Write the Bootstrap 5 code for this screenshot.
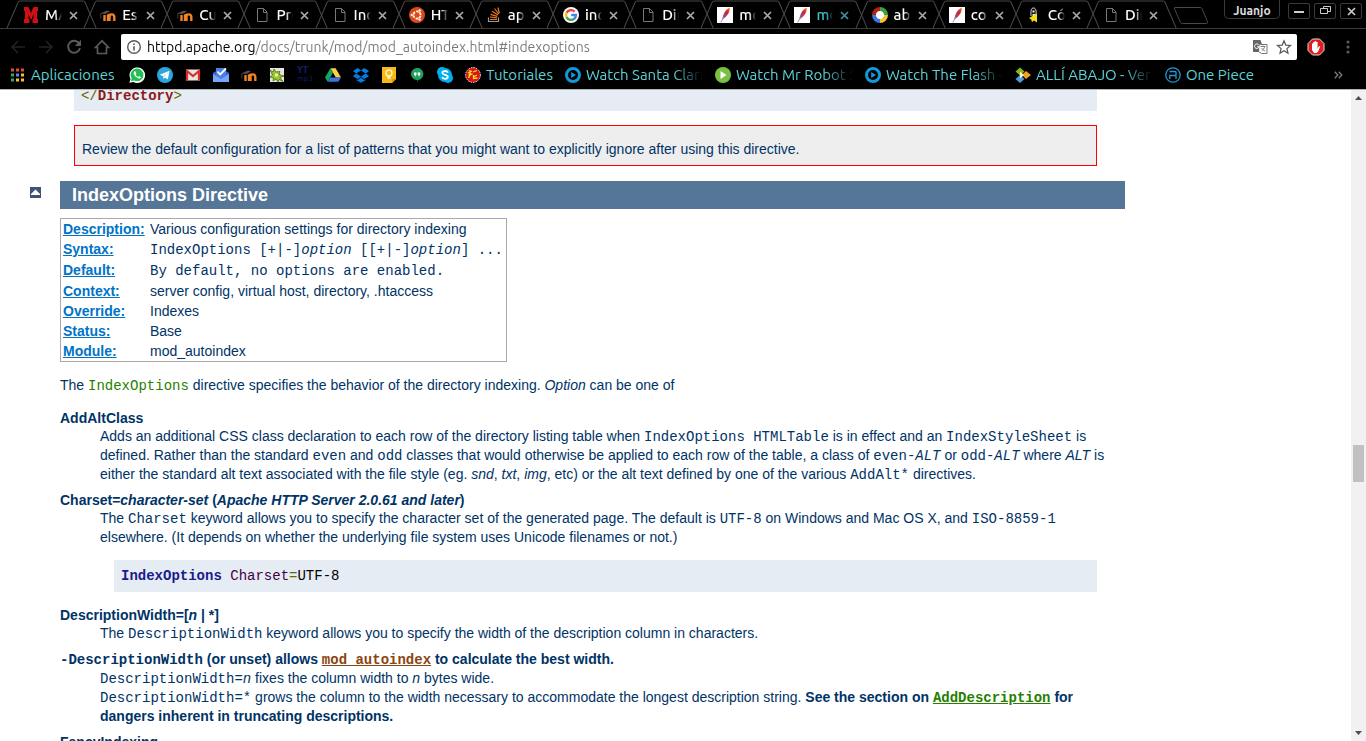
<!DOCTYPE html>
<html lang="es">
<head>
<meta charset="utf-8">
<meta name="viewport" content="width=device-width, initial-scale=1">
<title>mod_autoindex - Apache HTTP Server</title>
<link rel="stylesheet" href="https://cdn.jsdelivr.net/npm/bootstrap@5.3.0/dist/css/bootstrap.min.css">
<style>
  body { font-family: "Liberation Sans", Arial, sans-serif; font-size: 14px; line-height: 19px; color: #036; background: #fff; }
  button { background: none; border: 0; padding: 0; }
  svg { display: block; flex: none; }

  /* Browser frame */
  .browser { background: #000; font-family: Ubuntu, "Noto Sans", sans-serif; border-bottom: 1px solid #b4b4b4; }
  .tabstrip { height: 29px; border-bottom: 1px solid #3c3c3c; }
  .tabset { padding-left: 13px; }
  .tab { flex: 1 1 0; min-width: 0; height: 28px; padding: 2px 0 0 10px; font-size: 15px; }
  .tab > a { color: #fff; text-decoration: none; gap: 6px; }
  .tab .edge { position: absolute; left: -7px; top: 0; width: calc(100% + 14px); height: 28px; pointer-events: none; stroke: #484848; }
  .newtab { margin-top: 7px; }
  .newtab path { fill: none; stroke: #484848; }
  .tab .title { width: 17px; line-height: 20px; font-weight: 500; }
  .fade-end { overflow: hidden; white-space: nowrap; -webkit-mask-image: linear-gradient(90deg, #000 60%, transparent); mask-image: linear-gradient(90deg, #000 60%, transparent); }
  .tab.current > a { color: #3fc3cb; }
  .tab .x { margin-left: 7px; color: #aaa; }
  .tab.current .x { color: #3a9299; }
  .frame-tools { width: 196px; padding: 0 4px 0 3px; }
  .user { width: 56px; height: 19px; border: 1px solid #3a3a3a; border-top: 0; border-radius: 0 0 5px 5px; padding-top: 3px; color: #ddd; font-size: 12px; line-height: 15px; font-weight: 600; }
  .winbtn { width: 22px; height: 16px; margin-top: 3px; border: 1px solid #3a3a3a; border-radius: 2px; color: #ccc; }
  .toolbar { padding: 5px 9px 0 10px; height: 31px; }
  .toolbar .nav-icons { width: 111px; gap: 12px; }
  .omnibox { height: 26px; background: #fff; border-radius: 2px; padding: 0 5px; }
  .omnibox .info { margin-right: 5px; }
  .omnibox input { border: 0; outline: 0; font-size: 14px; height: 26px; padding: 0; min-width: 0; color: #777;
    background: linear-gradient(90deg, #000 108px, #777 108px); -webkit-background-clip: text; background-clip: text; -webkit-text-fill-color: transparent; }
  .toolbar .ext { width: 60px; padding-left: 10px; }
  .bookmarks { height: 29px; padding: 0 23px 0 9px; gap: 12px; font-size: 15px; line-height: 20px; }
  .bookmarks a { color: #5ed3d8; text-decoration: none; gap: 5px; white-space: nowrap; }
  .bookmarks .apps { width: 108px; padding-left: 2px; gap: 7px; }
  .bookmarks .long { width: 138px; }
  .bookmarks .fade-end { -webkit-mask-image: linear-gradient(90deg, #000 75%, transparent); mask-image: linear-gradient(90deg, #000 75%, transparent); }
  .bookmarks .ytmark { font: bold 8px/8px "DejaVu Sans", sans-serif; color: #121a66; width: 16px; }
  .ytmark span { font-size: 7px; display: block; line-height: 8px; font-weight: normal; }

  /* Document */
  .viewport { min-height: 0; }
  .doc { padding: 0 226px 0 60px; overflow: hidden; }
  .doc code, .doc pre { font-family: "Liberation Mono", "Courier New", monospace; font-size: 14px; color: inherit; }
  .doc code { line-height: 14px; }
  .doc pre.sample { background: #e5ecf3; padding: 7px; line-height: 18px; margin: 0 14px; color: #000; overflow: hidden; }
  .doc pre.sample.first { margin: -10px 28px 14px 14px; padding-bottom: 6px; }
  .warning { background: #eee; border: 1px solid #f00; padding: 14px 7px 6px; margin: 0 28px 15px 14px; }
  .doc h2 { background: #557697; color: #fff; font-size: 18px; line-height: 28px; font-weight: bold; padding-left: 12px; margin: 0 0 9px; }
  .totop { position: absolute; left: -30px; top: 6px; }
  .directive { border: 1px solid #aaa; border-collapse: separate; border-spacing: 0; width: 447px; margin-bottom: 14px; line-height: 18px; }
  .directive th, .directive td { padding: 1px 2px; height: 20px; }
  .directive .mono th, .directive .mono td { padding-bottom: 2px; height: 21px; vertical-align: top; }
  .directive .mono + .mono th, .directive .mono + .mono td { vertical-align: top; }
  .directive th { width: 87px; }
  .directive td { white-space: nowrap; }
  .doc a { color: #0073c7; }
  .doc a.module { color: #8b4513; }
  .doc a.name { color: #287f00; }
  .prose { padding-right: 14px; }
  .prose p { margin-bottom: 14px; }
  .prose dt { line-height: 18px; font-weight: bold; margin-top: 7px; }
  .prose dt.coded { line-height: 19px; }
  .prose dt:first-child { margin-top: 0; }
  .prose dd { margin: 0 0 0 40px; }
  .prose dd pre.sample { margin: 13px 14px 14px; }
  .green { color: #287f00 !important; }
  .punct { color: #660; } .tagname { color: #8b1a1a; } .kw { color: #1a1a8c; } .type { color: #404; }
  .rail { width: 15px; background: #f1f1f1; padding: 6px 0; }
  .rail .thumb { position: absolute; left: 2px; right: 2px; background: #c1c1c1; }
</style>
</head>
<body class="vh-100 d-flex flex-column overflow-hidden">

<svg width="0" height="0" class="position-absolute" aria-hidden="true">
  <defs>
    <linearGradient id="feather" x1="1" y1="0" x2="0" y2="1"><stop offset="0" stop-color="#f69923"/><stop offset=".35" stop-color="#d22128"/><stop offset=".75" stop-color="#97478e"/><stop offset="1" stop-color="#6d6e71"/></linearGradient>
    <symbol id="i-page" viewBox="0 0 16 16"><path d="M3.500 1.500h6l3.500 3.500v9.500h-9.500zM9.500 1.500v4h3.500" fill="none" stroke="#777"/></symbol>
    <symbol id="i-moodle" viewBox="0 0 16 16"><path d="M4.500 14V8M8 14V8.500q2-1.500 2.800 0M9.500 14V9.800a2.100 2.100 0 0 1 4.800 0V14" fill="none" stroke="#f08228" stroke-width="2.400"/><path d="M0 6.500 7 3.500l3 .8-4.500 2.700z" fill="#55504c"/><path d="M.8 6.500v5" stroke="#55504c" stroke-width=".8"/></symbol>
    <symbol id="i-apache" viewBox="0 0 16 16"><path d="M0 0h16v16H0z" fill="#fff"/><path d="M12.500.800c1.300 2.500-1.500 8-7 11.700C5.500 8 8.500 2.500 12.500.800z" fill="url(#feather)"/><path d="M6.500 10 3.800 15.500" stroke="#a98bb5" stroke-width="1"/></symbol>
    <symbol id="i-close" viewBox="0 0 9 9"><path d="m1 1 7 7M8 1 1 8" stroke="currentColor" stroke-width="1.700"/></symbol>
    <symbol id="i-watch" viewBox="0 0 16 16"><circle cx="8" cy="8" r="6.500" fill="#000" stroke="#1297d8" stroke-width="3"/><path d="m6.200 5 4.800 3-4.800 3z" fill="#1297d8"/></symbol>
    <symbol id="i-edge" viewBox="0 0 91 28" preserveAspectRatio="none"><path d="M1 28 12 2.500q.6-1.500 2-1.500h63q1.400 0 2 1.500L90 28" fill="none"/></symbol>
  </defs>
</svg>

<header class="browser flex-shrink-0">
  <div class="tabstrip d-flex">
    <nav class="tabset d-flex flex-grow-1" aria-label="Pestañas">
      <div class="tab d-flex align-items-center position-relative"><svg class="edge"><use href="#i-edge"/></svg><a href="#" class="d-flex align-items-center"><svg width="16" height="16" viewBox="0 0 16 16"><path d="M1 0h4.500L8 6l2.500-6H15v4h-1v8h1v4H9.500v-4h1V7L8.700 12H7.300L5.500 7v5h1v4H1v-4h1V4H1z" fill="#d00f14"/></svg><span class="title fade-end">MA</span></a><button class="x" aria-label="Cerrar"><svg width="9" height="9"><use href="#i-close"/></svg></button></div>
      <div class="tab d-flex align-items-center position-relative"><svg class="edge"><use href="#i-edge"/></svg><a href="#" class="d-flex align-items-center"><svg width="16" height="16"><use href="#i-moodle"/></svg><span class="title fade-end">Est</span></a><button class="x" aria-label="Cerrar"><svg width="9" height="9"><use href="#i-close"/></svg></button></div>
      <div class="tab d-flex align-items-center position-relative"><svg class="edge"><use href="#i-edge"/></svg><a href="#" class="d-flex align-items-center"><svg width="16" height="16"><use href="#i-moodle"/></svg><span class="title fade-end">Cu</span></a><button class="x" aria-label="Cerrar"><svg width="9" height="9"><use href="#i-close"/></svg></button></div>
      <div class="tab d-flex align-items-center position-relative"><svg class="edge"><use href="#i-edge"/></svg><a href="#" class="d-flex align-items-center"><svg width="16" height="16"><use href="#i-page"/></svg><span class="title fade-end">Pro</span></a><button class="x" aria-label="Cerrar"><svg width="9" height="9"><use href="#i-close"/></svg></button></div>
      <div class="tab d-flex align-items-center position-relative"><svg class="edge"><use href="#i-edge"/></svg><a href="#" class="d-flex align-items-center"><svg width="16" height="16"><use href="#i-page"/></svg><span class="title fade-end">Ind</span></a><button class="x" aria-label="Cerrar"><svg width="9" height="9"><use href="#i-close"/></svg></button></div>
      <div class="tab d-flex align-items-center position-relative"><svg class="edge"><use href="#i-edge"/></svg><a href="#" class="d-flex align-items-center"><svg width="16" height="16" viewBox="0 0 16 16"><circle cx="8" cy="8" r="8" fill="#dd4814"/><circle cx="8" cy="8" r="3.600" fill="none" stroke="#fff" stroke-width="1.700" stroke-dasharray="6.300 1.240" stroke-dashoffset="-.6"/><g fill="#fff" stroke="#dd4814" stroke-width=".6"><circle cx="2.900" cy="8" r="1.500"/><circle cx="10.600" cy="3.500" r="1.500"/><circle cx="10.600" cy="12.500" r="1.500"/></g></svg><span class="title fade-end">HT</span></a><button class="x" aria-label="Cerrar"><svg width="9" height="9"><use href="#i-close"/></svg></button></div>
      <div class="tab d-flex align-items-center position-relative"><svg class="edge"><use href="#i-edge"/></svg><a href="#" class="d-flex align-items-center"><svg width="16" height="16" viewBox="0 0 16 16"><path d="M2.500 10.500v4h10v-4" fill="none" stroke="#999" stroke-width="1.200"/><path d="M4 12.500h7M4 10l7 .8M4.500 7.300l6.800 2M6 4.300l6 3.800M8.500 1.500l4.200 5.500M12 .5l1.300 6" stroke="#e87722" stroke-width="1.200"/></svg><span class="title fade-end">ap</span></a><button class="x" aria-label="Cerrar"><svg width="9" height="9"><use href="#i-close"/></svg></button></div>
      <div class="tab d-flex align-items-center position-relative"><svg class="edge"><use href="#i-edge"/></svg><a href="#" class="d-flex align-items-center"><svg width="16" height="16" viewBox="0 0 16 16"><circle cx="8" cy="8" r="8" fill="#fff"/><g fill="none" stroke-width="2.400"><path d="M11.600 4.600A5 5 0 0 0 3.600 5.800" stroke="#ea4335"/><path d="M3.600 5.700a5 5 0 0 0 0 4.700" stroke="#fbbc05"/><path d="M3.600 10.200a5 5 0 0 0 7.700 1.500" stroke="#34a853"/><path d="M11.200 11.800A4.800 4.800 0 0 0 12.900 8H8.200" stroke="#4285f4"/></g></svg><span class="title fade-end">ind</span></a><button class="x" aria-label="Cerrar"><svg width="9" height="9"><use href="#i-close"/></svg></button></div>
      <div class="tab d-flex align-items-center position-relative"><svg class="edge"><use href="#i-edge"/></svg><a href="#" class="d-flex align-items-center"><svg width="16" height="16"><use href="#i-page"/></svg><span class="title fade-end">Dir</span></a><button class="x" aria-label="Cerrar"><svg width="9" height="9"><use href="#i-close"/></svg></button></div>
      <div class="tab d-flex align-items-center position-relative"><svg class="edge"><use href="#i-edge"/></svg><a href="#" class="d-flex align-items-center"><svg width="16" height="16"><use href="#i-apache"/></svg><span class="title fade-end">mo</span></a><button class="x" aria-label="Cerrar"><svg width="9" height="9"><use href="#i-close"/></svg></button></div>
      <div class="tab current d-flex align-items-center position-relative"><svg class="edge"><use href="#i-edge"/></svg><a href="#" class="d-flex align-items-center" aria-current="page"><svg width="16" height="16"><use href="#i-apache"/></svg><span class="title fade-end">mo</span></a><button class="x" aria-label="Cerrar"><svg width="9" height="9"><use href="#i-close"/></svg></button></div>
      <div class="tab d-flex align-items-center position-relative"><svg class="edge"><use href="#i-edge"/></svg><a href="#" class="d-flex align-items-center"><svg width="16" height="16" viewBox="0 0 16 16"><circle cx="8" cy="8" r="4.500" fill="#fff"/><g fill="none" stroke-width="4"><path d="M2 8a6 6 0 0 1 6-6" stroke="#b5200f"/><path d="M8 2a6 6 0 0 1 6 6" stroke="#3aa33f"/><path d="M14 8a6 6 0 0 1-6 6" stroke="#f5c52c"/><path d="M8 14a6 6 0 0 1-6-6" stroke="#3a78e0"/></g></svg><span class="title fade-end">ab</span></a><button class="x" aria-label="Cerrar"><svg width="9" height="9"><use href="#i-close"/></svg></button></div>
      <div class="tab d-flex align-items-center position-relative"><svg class="edge"><use href="#i-edge"/></svg><a href="#" class="d-flex align-items-center"><svg width="16" height="16"><use href="#i-apache"/></svg><span class="title fade-end">co</span></a><button class="x" aria-label="Cerrar"><svg width="9" height="9"><use href="#i-close"/></svg></button></div>
      <div class="tab d-flex align-items-center position-relative"><svg class="edge"><use href="#i-edge"/></svg><a href="#" class="d-flex align-items-center"><svg width="16" height="16" viewBox="0 0 16 16"><path d="M5 9c-.3-5 0-8 2.500-8S10.500 4 10 9" fill="#111" stroke="#ddd"/><path d="M6.500 3.500h2v2h-2zM6.500 7h3v3h-3z" fill="#eee"/><path d="m3 11 8-4.500v9L8 13.500 6 15l-.8-2.500z" fill="#f3df13"/></svg><span class="title fade-end">Có</span></a><button class="x" aria-label="Cerrar"><svg width="9" height="9"><use href="#i-close"/></svg></button></div>
      <div class="tab d-flex align-items-center position-relative"><svg class="edge"><use href="#i-edge"/></svg><a href="#" class="d-flex align-items-center"><svg width="16" height="16"><use href="#i-page"/></svg><span class="title fade-end">Dir</span></a><button class="x" aria-label="Cerrar"><svg width="9" height="9"><use href="#i-close"/></svg></button></div>
    </nav>
    <div class="frame-tools d-flex align-items-start flex-shrink-0">
      <button class="newtab" aria-label="Nueva pestaña"><svg width="36" height="17" viewBox="0 0 36 17"><path d="M2 .5h25q1.500 0 2 1.200l5.500 13q.5 1.800-1 1.800h-24q-1.500 0-2-1.200L1.500 2Q.8.500 2 .500z"/></svg></button>
      <div class="d-flex align-items-start ms-auto gap-1">
        <button class="user me-1">Juanjo</button>
        <button class="winbtn d-flex align-items-center justify-content-center" aria-label="Minimizar"><svg width="10" height="10"><path d="M0 6h10" stroke="currentColor" stroke-width="2"/></svg></button>
        <button class="winbtn d-flex align-items-center justify-content-center" aria-label="Restaurar"><svg width="11" height="10"><path d="M3.500 2.500v-2h7v5h-3M.500 2.500h7v5h-7z" fill="none" stroke="currentColor"/></svg></button>
        <button class="winbtn d-flex align-items-center justify-content-center" aria-label="Cerrar ventana"><svg width="9" height="9"><use href="#i-close"/></svg></button>
      </div>
    </div>
  </div>

  <div class="toolbar d-flex">
    <div class="nav-icons d-flex align-items-center flex-shrink-0">
      <button aria-label="Atrás"><svg width="16" height="16" viewBox="0 0 16 16"><path d="M15 8H2.500M8 2 2 8l6 6" fill="none" stroke="#222" stroke-width="1.600"/></svg></button>
      <button aria-label="Adelante"><svg width="16" height="16" viewBox="0 0 16 16"><path d="M1 8h12.500M8 2l6 6-6 6" fill="none" stroke="#222" stroke-width="1.600"/></svg></button>
      <button aria-label="Recargar"><svg width="16" height="16" viewBox="0 0 16 16"><path d="M13.200 4.500A6 6 0 1 0 14 9" fill="none" stroke="#5a5a5a" stroke-width="1.900"/><path d="M15 .8V7H8.800z" fill="#5a5a5a"/></svg></button>
      <button aria-label="Inicio"><svg width="16" height="16" viewBox="0 0 16 16"><path d="M1.500 8.500 8 1.800l6.500 6.700h-2v6h-9v-6z" fill="none" stroke="#5a5a5a" stroke-width="1.700"/></svg></button>
    </div>
    <form class="omnibox d-flex align-items-center flex-grow-1" onsubmit="return false">
      <button type="button" class="info" aria-label="Información del sitio"><svg width="16" height="16" viewBox="0 0 16 16"><circle cx="8" cy="8" r="6.300" fill="none" stroke="#5a5a5a" stroke-width="1.400"/><path d="M8 7.200v4.300M8 4.500v1.600" stroke="#5a5a5a" stroke-width="1.600"/></svg></button>
      <input type="text" class="flex-grow-1" aria-label="Dirección" value="httpd.apache.org/docs/trunk/mod/mod_autoindex.html#indexoptions">
      <button type="button" class="me-2" aria-label="Traducir"><svg width="16" height="16" viewBox="0 0 16 16"><path d="M1 1h7.500l4 12H1z" fill="#666"/><path d="M7.500 5.500h7.500v9H9.500L7 13" fill="#fff" stroke="#777"/><path d="M6.700 5.800a2.300 2.300 0 1 0 .4 2H5" fill="none" stroke="#fff"/><path d="M8.500 7.500h5M11 6.500v1M12.700 7.500c-.3 2-2 3.500-3 4M9.700 9c.5 1.200 2 2.500 3.500 3" fill="none" stroke="#777" stroke-width=".9"/></svg></button>
      <button type="button" aria-label="Añadir a marcadores"><svg width="16" height="16" viewBox="0 0 16 16"><path d="m8 1.800 1.800 4.300 4.700.4-3.600 3.100 1.100 4.600L8 11.700l-4 2.500 1.100-4.600L1.500 6.500l4.700-.4z" fill="none" stroke="#555" stroke-width="1.200"/></svg></button>
    </form>
    <div class="ext d-flex align-items-center justify-content-between flex-shrink-0">
      <button aria-label="Bloqueador"><svg width="18" height="18" viewBox="0 0 18 18"><path d="M5.500 1h7L17 5.500v7L12.500 17h-7L1 12.500v-7z" fill="#e01c1c" stroke="#ddd"/><path d="M5 9V5.500h1.300V9V4h1.400v5V3h1.500v6V4h1.400v6.500l1.400-2.500 1.200.4-2 5.100-1.700 1.500H7L5 12z" fill="#fff"/></svg></button>
      <button aria-label="Menú"><svg width="16" height="16" viewBox="0 0 16 16" fill="#5a5a5a"><circle cx="7" cy="3" r="1.600"/><circle cx="7" cy="8" r="1.600"/><circle cx="7" cy="13" r="1.600"/></svg></button>
    </div>
  </div>

  <nav class="bookmarks d-flex align-items-center" aria-label="Marcadores">
    <a href="#" class="apps d-flex align-items-center"><svg width="13" height="14" viewBox="0 0 13 14"><path d="M0 .5h3v3H0zM5 .5h3v3H5zM10 .5h3v3h-3z" fill="#e8453c"/><path d="M0 5.500h3v3H0z" fill="#3aa757"/><path d="M5 5.500h3v3H5z" fill="#4688f1"/><path d="M10 5.500h3v3h-3zM5 10.500h3v3H5zM10 10.500h3v3h-3z" fill="#fabb2d"/><path d="M0 10.500h3v3H0z" fill="#3aa757"/></svg>Aplicaciones</a>
    <a href="#" aria-label="WhatsApp"><svg width="16" height="16" viewBox="0 0 16 16"><path d="M.3 15.700 1.500 12A7.800 7.800 0 1 1 4.500 15z" fill="#fff"/><path d="m1.800 14.200.9-2.800A6.400 6.400 0 1 1 5 13.500z" fill="#20c154"/><path d="M5.300 4.300c-1.600 1.800.2 4.300 1.800 5.700 1.700 1.400 4 2.200 5 .4l-1.900-1.300-1 .9c-1.200-.5-2-1.300-2.600-2.500l.7-.9-.8-2.200z" fill="#fff"/></svg></a>
    <a href="#" aria-label="Telegram"><svg width="16" height="16" viewBox="0 0 16 16"><circle cx="8" cy="8" r="8" fill="#2ca5e0"/><path d="m2.800 7.800 9.700-4-1.700 8.700-2.800-2-1.500 1.500-.5-2.800z" fill="#fff"/><path d="m6 9.200 5-4-3.800 4.700-.7 2z" fill="#b9dcef"/></svg></a>
    <a href="#" aria-label="Gmail"><svg width="16" height="16" viewBox="0 0 16 16"><path d="M1 2.500h14v11H1z" fill="#e8e6e3"/><path d="M2 13.500V4l6 5 6-5v9.500" fill="none" stroke="#d93025" stroke-width="2.200"/></svg></a>
    <a href="#" aria-label="Inbox"><svg width="16" height="16" viewBox="0 0 16 16"><path d="m0 6 8-5 8 5v9H0z" fill="#3367d6"/><path d="M3 1h10v8L8 12 3 9z" fill="#4a7fe8"/><path d="m4.500 4.500 2.700 3L13 1.500" fill="none" stroke="#fff" stroke-width="1.800"/><path d="m0 7 8 5 8-5v8H0z" fill="#78a7f8"/></svg></a>
    <a href="#" aria-label="Moodle"><svg width="16" height="16"><use href="#i-moodle"/></svg></a>
    <a href="#" aria-label="Engranaje"><svg width="16" height="16" viewBox="0 0 16 16"><path d="M1 1h14v14H1z" fill="#e4e6df"/><path d="m1 3 3 2 1-3 2 3 4-.5-1 3 5 1.500-4 1.500 3 4-4-2-1 2.500-2-3-3 2 .5-3L1 10l2.500-2z" fill="#9ac91c" stroke="#3d5b11" stroke-width=".7"/><circle cx="7.500" cy="8" r="1.700" fill="#e4e6df"/></svg></a>
    <a href="#" class="ytmark">YT<span>mp3</span></a>
    <a href="#" aria-label="Drive"><svg width="16" height="16" viewBox="0 0 16 16"><path d="M5.400 1.200h5.200L16 10.500h-5.200z" fill="#ffcf44"/><path d="M5.400 1.200 8 5.800 2.700 14.800 0 10.500z" fill="#11a861"/><path d="M5.300 10.500H16l-2.700 4.300H2.700z" fill="#3777e3"/></svg></a>
    <a href="#" aria-label="Dropbox"><svg width="16" height="16" viewBox="0 0 16 16" fill="#007ee5"><path d="M4.800 1 8 3.600 3.200 6.500 0 4zM11.200 1 8 3.600l4.800 2.900L16 4zM0 9.200l3.200-2.700L8 9.400 4.800 12zM16 9.200l-3.200-2.700L8 9.400l3.200 2.600zM3.500 12.300 4.800 13 8 10.500l3.200 2.500 1.300-.7v1L8 15.700l-4.500-2.400z"/></svg></a>
    <a href="#" aria-label="Keep"><svg width="16" height="16" viewBox="0 0 16 16"><path d="M1 0h14v12l-4 4H1z" fill="#f9b912"/><path d="M11 16v-4h4z" fill="#d69a0a"/><circle cx="8" cy="6" r="3" fill="none" stroke="#fff5d0" stroke-width="1.300"/><path d="M6.500 8.800h3v3h-3z" fill="#fff5d0"/></svg></a>
    <a href="#" aria-label="Hangouts"><svg width="16" height="16" viewBox="0 0 16 16"><path d="M8 1a6 6 0 0 1 .8 12L8 15.500V13A6 6 0 0 1 8 1z" fill="#1fa05f"/><path d="M5 5.500h2.500v2.300L6.500 9.300H5.600L6 8H5zM8.700 5.500h2.500v2.300l-1 1.500h-.9l.4-1.300h-1z" fill="#fff"/></svg></a>
    <a href="#" aria-label="Skype"><svg width="16" height="16" viewBox="0 0 16 16"><circle cx="5" cy="5" r="5" fill="#00aff0"/><circle cx="11" cy="11" r="5" fill="#00aff0"/><circle cx="8" cy="8" r="7" fill="#00aff0"/><path d="M10.800 5.800C10 3.300 5.200 3.500 5.400 6c.2 2.400 5.400 1.300 5.400 3.800S5.800 12.500 5.200 10" fill="none" stroke="#fff" stroke-width="1.800"/></svg></a>
    <a href="#" class="d-flex align-items-center"><svg width="16" height="16" viewBox="0 0 16 16"><circle cx="8" cy="8" r="7.400" fill="#d81515" stroke="#eee" stroke-dasharray="1.500 1"/><path d="M3 6l4-2M5 3v5L3.500 11M3.500 8l4-1M8 5l4-1.500M8.500 8v3.500l4-.5M8.500 10l3.500-2" fill="none" stroke="#ffdf1f" stroke-width="1.300"/></svg>Tutoriales</a>
    <a href="#" class="long d-flex align-items-center"><svg width="16" height="16"><use href="#i-watch"/></svg><span class="fade-end flex-grow-1">Watch Santa Clarita</span></a>
    <a href="#" class="long d-flex align-items-center"><svg width="16" height="16" viewBox="0 0 16 16"><circle cx="8" cy="8" r="8" fill="#79c143"/><path d="m5.500 4 6 4-6 4z" fill="#fff"/></svg><span class="fade-end flex-grow-1">Watch Mr Robot S</span></a>
    <a href="#" class="long d-flex align-items-center"><svg width="16" height="16"><use href="#i-watch"/></svg><span class="fade-end flex-grow-1">Watch The Flash -</span></a>
    <a href="#" class="long d-flex align-items-center"><svg width="16" height="16" viewBox="0 0 16 16"><path d="m5 .500 4.500 4-4.500 4-4.500-4z" fill="#86b817"/><path d="m11 4 5 4-5 4-4-4z" fill="#f4a21e"/><path d="m5 8 4.500 4L5 16 .5 12z" fill="#4c9be0"/><path d="m5 4.500 4 3.500-4 3.500z" fill="#fff3c4"/></svg><span class="fade-end flex-grow-1">ALLÍ ABAJO - Ver</span></a>
    <a href="#" class="d-flex align-items-center"><svg width="16" height="16" viewBox="0 0 16 16"><g fill="none" stroke="#2298d4" stroke-width="1.300"><circle cx="8" cy="8" r="7.200"/><path d="M4.500 4.500h5.500q1 0 1 1V12M4.800 12V8.500H11"/></g></svg>One Piece</a>
    <button class="ms-auto" aria-label="Más marcadores"><svg width="9" height="8" viewBox="0 0 9 8"><path d="m.8.800 3 3.200-3 3.200M4.800.800l3 3.200-3 3.200" fill="none" stroke="#777" stroke-width="1.400"/></svg></button>
  </nav>
</header>

<div class="viewport d-flex flex-grow-1">
  <main class="doc flex-grow-1">
    <pre class="sample first"><span class="punct">&lt;/</span><b class="tagname">Directory</b><span class="punct">&gt;</span></pre>
    <div class="warning">Review the default configuration for a list of patterns that you might want to explicitly ignore after using this directive.</div>
    <section>
      <div class="position-relative">
        <a href="#" class="totop" aria-label="Arriba"><svg width="11" height="11"><path d="M0 0h11v11H0z" fill="#405473"/><path d="M5.500 2.500 10 7v1H1V7z" fill="#fff"/></svg></a>
        <h2>IndexOptions Directive</h2>
      </div>
      <table class="directive">
        <tbody>
          <tr><th scope="row"><a href="#">Description:</a></th><td>Various configuration settings for directory indexing</td></tr>
          <tr class="mono"><th scope="row"><a href="#">Syntax:</a></th><td><code>IndexOptions [+|-]<i>option</i> [[+|-]<i>option</i>] ...</code></td></tr>
          <tr class="mono"><th scope="row"><a href="#">Default:</a></th><td><code>By default, no options are enabled.</code></td></tr>
          <tr><th scope="row"><a href="#">Context:</a></th><td>server config, virtual host, directory, .htaccess</td></tr>
          <tr><th scope="row"><a href="#">Override:</a></th><td>Indexes</td></tr>
          <tr><th scope="row"><a href="#">Status:</a></th><td>Base</td></tr>
          <tr><th scope="row"><a href="#">Module:</a></th><td>mod_autoindex</td></tr>
        </tbody>
      </table>
      <div class="prose">
        <p>The <code class="green">IndexOptions</code> directive specifies the behavior of the directory indexing. <em>Option</em> can be one of</p>
        <dl>
          <dt>AddAltClass</dt>
          <dd>Adds an additional CSS class declaration to each row of the directory listing table when <code>IndexOptions HTMLTable</code> is in effect and an <code>IndexStyleSheet</code> is defined. Rather than the standard <code>even</code> and <code>odd</code> classes that would otherwise be applied to each row of the table, a class of <code>even-<em>ALT</em></code> or <code>odd-<em>ALT</em></code> where <em>ALT</em> is either the standard alt text associated with the file style (eg. <em>snd</em>, <em>txt</em>, <em>img</em>, etc) or the alt text defined by one of the various <code>AddAlt*</code> directives.</dd>
          <dt>Charset=<em>character-set</em> (<em>Apache HTTP Server 2.0.61 and later</em>)</dt>
          <dd>The <code>Charset</code> keyword allows you to specify the character set of the generated page. The default is <code>UTF-8</code> on Windows and Mac OS X, and <code>ISO-8859-1</code> elsewhere. (It depends on whether the underlying file system uses Unicode filenames or not.)
            <pre class="sample"><b class="kw">IndexOptions</b> <span class="type">Charset</span><span class="punct">=</span>UTF-8</pre>
          </dd>
          <dt>DescriptionWidth=[<em>n</em> | *]</dt>
          <dd>The <code>DescriptionWidth</code> keyword allows you to specify the width of the description column in characters.</dd>
          <dt class="coded"><code>-DescriptionWidth</code> (or unset) allows <a href="#" class="module"><code>mod_autoindex</code></a> to calculate the best width.</dt>
          <dd><code>DescriptionWidth=<em>n</em></code> fixes the column width to <em>n</em> bytes wide.<br>
            <code>DescriptionWidth=*</code> grows the column to the width necessary to accommodate the longest description string. <b>See the section on <a href="#" class="name"><code>AddDescription</code></a> for dangers inherent in truncating descriptions.</b></dd>
          <dt>FancyIndexing</dt>
        </dl>
      </div>
    </section>
  </main>
  <div class="rail position-relative d-flex flex-column justify-content-between align-items-center flex-shrink-0" aria-hidden="true">
    <svg width="7" height="4"><path d="M3.500 0 7 4H0z" fill="#505050"/></svg>
    <div class="thumb" style="top:54.5%;height:5.7%"></div>
    <svg width="7" height="4"><path d="M0 0h7L3.500 4z" fill="#505050"/></svg>
  </div>
</div>

<script src="https://cdn.jsdelivr.net/npm/bootstrap@5.3.0/dist/js/bootstrap.bundle.min.js"></script>
</body>
</html>
